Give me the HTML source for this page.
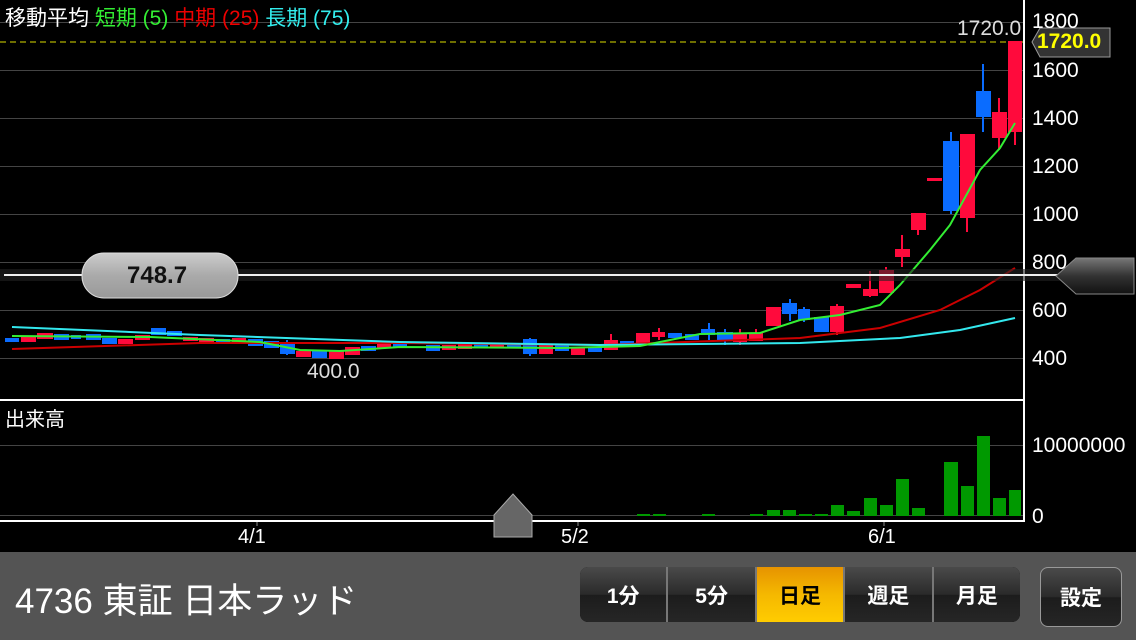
<!DOCTYPE html>
<html><head><meta charset="utf-8"><style>
html,body{margin:0;padding:0;background:#000;width:1136px;height:640px;overflow:hidden;font-family:"Liberation Sans","Noto Sans CJK JP",sans-serif}
.t{position:absolute;white-space:nowrap}
#bar{position:absolute;left:0;top:552px;width:1136px;height:88px;background:#545454}
.seg{position:absolute;top:567px;height:55px;border-radius:8px;overflow:hidden;display:flex;left:580px;width:440px;background:#000}
.b{flex:1;display:flex;align-items:center;justify-content:center;color:#fff;font-weight:bold;font-size:21px;background:linear-gradient(#4a4a4a,#2a2a2a 50%,#1c1c1c 51%,#262626);border-left:2px solid #777}
.b:first-child{border-left:none}
.on{background:linear-gradient(#e69300,#f5b800 50%,#ffcc00);color:#000}
</style></head><body>
<svg width="1136" height="552" style="position:absolute;left:0;top:0">
<g stroke="#444" stroke-width="1">
<line x1="0" y1="22.5" x2="1024" y2="22.5"/><line x1="0" y1="70.5" x2="1024" y2="70.5"/><line x1="0" y1="118.5" x2="1024" y2="118.5"/><line x1="0" y1="166.5" x2="1024" y2="166.5"/><line x1="0" y1="214.5" x2="1024" y2="214.5"/><line x1="0" y1="262.5" x2="1024" y2="262.5"/><line x1="0" y1="310.5" x2="1024" y2="310.5"/><line x1="0" y1="358.5" x2="1024" y2="358.5"/><line x1="0" y1="445.5" x2="1024" y2="445.5"/><line x1="0" y1="515.5" x2="1024" y2="515.5"/>
</g>
<line x1="0" y1="42" x2="1024" y2="42" stroke="#dddd00" stroke-width="1" stroke-dasharray="6,4"/>
<g fill="#0a6cff" stroke="#0a6cff" stroke-width="2">
<rect x="6" y="339" width="12" height="2"/><rect x="55" y="335" width="13" height="4"/><rect x="72" y="336" width="8" height="2"/><rect x="87" y="335" width="13" height="4"/><rect x="103" y="339" width="13" height="4"/><rect x="152" y="329" width="13" height="5"/><rect x="168" y="332" width="13" height="3"/><rect x="217" y="340" width="12" height="2"/><rect x="249" y="340" width="13" height="5"/><rect x="265" y="342" width="13" height="5"/><rect x="281" y="343" width="13" height="10"/><rect x="313" y="351" width="13" height="6"/><rect x="362" y="347" width="13" height="3"/><rect x="394" y="343" width="12" height="3"/><rect x="427" y="346" width="12" height="4"/><rect x="475" y="345" width="12" height="2"/><rect x="508" y="344" width="12" height="2"/><rect x="524" y="340" width="12" height="13"/><rect x="556" y="346" width="12" height="4"/><rect x="589" y="348" width="12" height="3"/><rect x="621" y="342" width="12" height="3"/><rect x="669" y="334" width="12" height="3"/><rect x="686" y="335" width="12" height="4"/><rect x="702" y="330" width="12" height="4"/><rect x="718" y="333" width="14" height="7"/><rect x="783" y="304" width="13" height="9"/><rect x="799" y="310" width="10" height="9"/><rect x="815" y="318" width="13" height="13"/><rect x="944" y="142" width="14" height="68"/><rect x="977" y="92" width="13" height="24"/>
<line x1="709" y1="323" x2="709" y2="340"/><line x1="725" y1="329" x2="725" y2="345"/><line x1="790" y1="299" x2="790" y2="321"/><line x1="804" y1="307" x2="804" y2="322"/><line x1="951" y1="132" x2="951" y2="214"/><line x1="983" y1="64" x2="983" y2="132"/><line x1="530" y1="338" x2="530" y2="356"/><line x1="287" y1="340" x2="287" y2="355"/>
</g>
<g fill="#ff0a3c" stroke="#ff0a3c" stroke-width="2">
<rect x="22" y="337" width="13" height="4"/><rect x="38" y="334" width="14" height="4"/><rect x="119" y="340" width="13" height="3"/><rect x="136" y="336" width="13" height="3"/><rect x="184" y="338" width="13" height="2"/><rect x="200" y="339" width="13" height="2"/><rect x="233" y="339" width="12" height="2"/><rect x="297" y="352" width="13" height="4"/><rect x="330" y="352" width="13" height="6"/><rect x="346" y="348" width="13" height="6"/><rect x="378" y="343" width="12" height="4"/><rect x="443" y="346" width="12" height="3"/><rect x="459" y="345" width="12" height="3"/><rect x="491" y="344" width="12" height="2"/><rect x="540" y="345" width="12" height="8"/><rect x="572" y="349" width="12" height="5"/><rect x="605" y="341" width="12" height="8"/><rect x="637" y="334" width="12" height="10"/><rect x="653" y="333" width="11" height="3"/><rect x="734" y="335" width="12" height="6"/><rect x="750" y="334" width="12" height="6"/><rect x="767" y="308" width="13" height="17"/><rect x="831" y="307" width="12" height="24"/><rect x="847" y="285" width="13" height="2"/><rect x="864" y="290" width="13" height="5"/><rect x="880" y="271" width="13" height="21"/><rect x="896" y="250" width="13" height="6"/><rect x="912" y="214" width="13" height="15"/><rect x="928" y="179" width="13" height="1"/><rect x="961" y="135" width="13" height="82"/><rect x="993" y="113" width="13" height="24"/><rect x="1009" y="42" width="12" height="89"/>
<line x1="611" y1="334" x2="611" y2="350"/><line x1="659" y1="328" x2="659" y2="340"/><line x1="740" y1="329" x2="740" y2="345"/><line x1="756" y1="329" x2="756" y2="341"/><line x1="837" y1="304" x2="837" y2="335"/><line x1="870" y1="271" x2="870" y2="297"/><line x1="886" y1="267" x2="886" y2="292"/><line x1="902" y1="235" x2="902" y2="267"/><line x1="918" y1="229" x2="918" y2="235"/><line x1="967" y1="217" x2="967" y2="232"/><line x1="999" y1="98" x2="999" y2="150"/><line x1="1015" y1="131" x2="1015" y2="145"/>
</g>
<polyline fill="none" stroke="#c00" stroke-width="2" points="12,349 200,343 400,343 600,345 800,338 880,328 940,310 980,290 1015,268"/>
<polyline fill="none" stroke="#33e8ee" stroke-width="2" points="12,327 200,335 400,342 600,345 800,343 900,338 960,330 1015,318"/>
<polyline fill="none" stroke="#33ee33" stroke-width="2" points="12,336 150,337 260,342 300,350 340,351 400,347 560,348 640,346 700,334 760,333 800,320 840,315 880,305 900,285 930,250 950,225 980,170 1000,148 1015,123"/>
<g fill="#009900">
<rect x="637" y="514" width="13" height="2"/><rect x="653" y="514" width="13" height="2"/><rect x="702" y="514" width="13" height="2"/><rect x="750" y="514" width="13" height="2"/><rect x="767" y="510" width="13" height="6"/><rect x="783" y="510" width="13" height="6"/><rect x="799" y="514" width="13" height="2"/><rect x="815" y="514" width="13" height="2"/><rect x="831" y="505" width="13" height="11"/><rect x="847" y="511" width="13" height="5"/><rect x="864" y="498" width="13" height="18"/><rect x="880" y="505" width="13" height="11"/><rect x="896" y="479" width="13" height="37"/><rect x="912" y="508" width="13" height="8"/><rect x="944" y="462" width="14" height="54"/><rect x="961" y="486" width="13" height="30"/><rect x="977" y="436" width="13" height="80"/><rect x="993" y="498" width="13" height="18"/><rect x="1009" y="490" width="12" height="26"/>
</g>
<line x1="1024" y1="0" x2="1024" y2="522" stroke="#fff" stroke-width="2"/>
<line x1="0" y1="400" x2="1024" y2="400" stroke="#fff" stroke-width="2"/>
<line x1="0" y1="521" x2="1024" y2="521" stroke="#fff" stroke-width="2"/>
<rect x="0" y="269" width="1060" height="12" fill="#222" opacity="0.6"/>
<line x1="4" y1="275" x2="1060" y2="275" stroke="#eee" stroke-width="2"/>
<defs><linearGradient id="pg" x1="0" y1="0" x2="0" y2="1"><stop offset="0" stop-color="#ccc"/><stop offset="0.5" stop-color="#aaa"/><stop offset="1" stop-color="#999"/></linearGradient>
<linearGradient id="ag" x1="0" y1="0" x2="0" y2="1"><stop offset="0" stop-color="#777"/><stop offset="0.5" stop-color="#333"/><stop offset="1" stop-color="#111"/></linearGradient></defs>
<rect x="82" y="253" width="156" height="45" rx="22" fill="url(#pg)" stroke="#ddd"/>
<path d="M1056,276 L1076,258 L1134,258 L1134,294 L1076,294 Z" fill="url(#ag)" stroke="#888"/>
<path d="M1032,42 L1040,28 L1110,28 L1110,57 L1040,57 Z" fill="#333" stroke="#999"/>
<path d="M494,515 L513,494 L532,515 L532,537 L494,537 Z" fill="#666" stroke="#aaa"/>
<line x1="257" y1="522" x2="257" y2="526" stroke="#888"/><line x1="578" y1="522" x2="578" y2="526" stroke="#888"/><line x1="884" y1="522" x2="884" y2="526" stroke="#888"/>
</svg>
<div class="t" style="left:5px;top:2px;font-size:21px;color:#fff">移動平均 <span style="color:#3e3">短期 (5)</span> <span style="color:#e00">中期 (25)</span> <span style="color:#3ee">長期 (75)</span></div>
<div class="t" style="left:957px;top:17px;font-size:21px;color:#ddd">1720.0</div>
<div class="t" style="left:1037px;top:30px;font-size:21px;color:#ff0;font-weight:bold">1720.0</div>
<div class="t" style="left:1032px;top:10px;font-size:21px;color:#fff;line-height:24px">1800</div>
<div class="t" style="left:1032px;top:59px;font-size:21px;color:#fff">1600</div>
<div class="t" style="left:1032px;top:107px;font-size:21px;color:#fff">1400</div>
<div class="t" style="left:1032px;top:155px;font-size:21px;color:#fff">1200</div>
<div class="t" style="left:1032px;top:203px;font-size:21px;color:#fff">1000</div>
<div class="t" style="left:1032px;top:251px;font-size:21px;color:#fff">800</div>
<div class="t" style="left:1032px;top:299px;font-size:21px;color:#fff">600</div>
<div class="t" style="left:1032px;top:347px;font-size:21px;color:#fff">400</div>
<div class="t" style="left:307px;top:360px;font-size:21px;color:#ddd">400.0</div>
<div class="t" style="left:127px;top:262px;font-size:24px;color:#111;font-weight:bold">748.7</div>
<div class="t" style="left:5px;top:403px;font-size:20px;color:#fff">出来高</div>
<div class="t" style="left:1032px;top:434px;font-size:21px;color:#fff">10000000</div>
<div class="t" style="left:1032px;top:505px;font-size:21px;color:#fff">0</div>
<div class="t" style="left:238px;top:526px;font-size:20px;color:#fff">4/1</div>
<div class="t" style="left:561px;top:526px;font-size:20px;color:#fff">5/2</div>
<div class="t" style="left:868px;top:526px;font-size:20px;color:#fff">6/1</div>
<div id="bar"></div>
<div class="t" style="left:15px;top:573px;font-size:35px;color:#fff">4736 東証 日本ラッド</div>
<div class="seg"><div class="b">1分</div><div class="b">5分</div><div class="b on">日足</div><div class="b">週足</div><div class="b">月足</div></div>
<div class="b" style="position:absolute;left:1040px;top:567px;width:80px;height:58px;border-radius:8px;border:1px solid #999">設定</div>
</body></html>
